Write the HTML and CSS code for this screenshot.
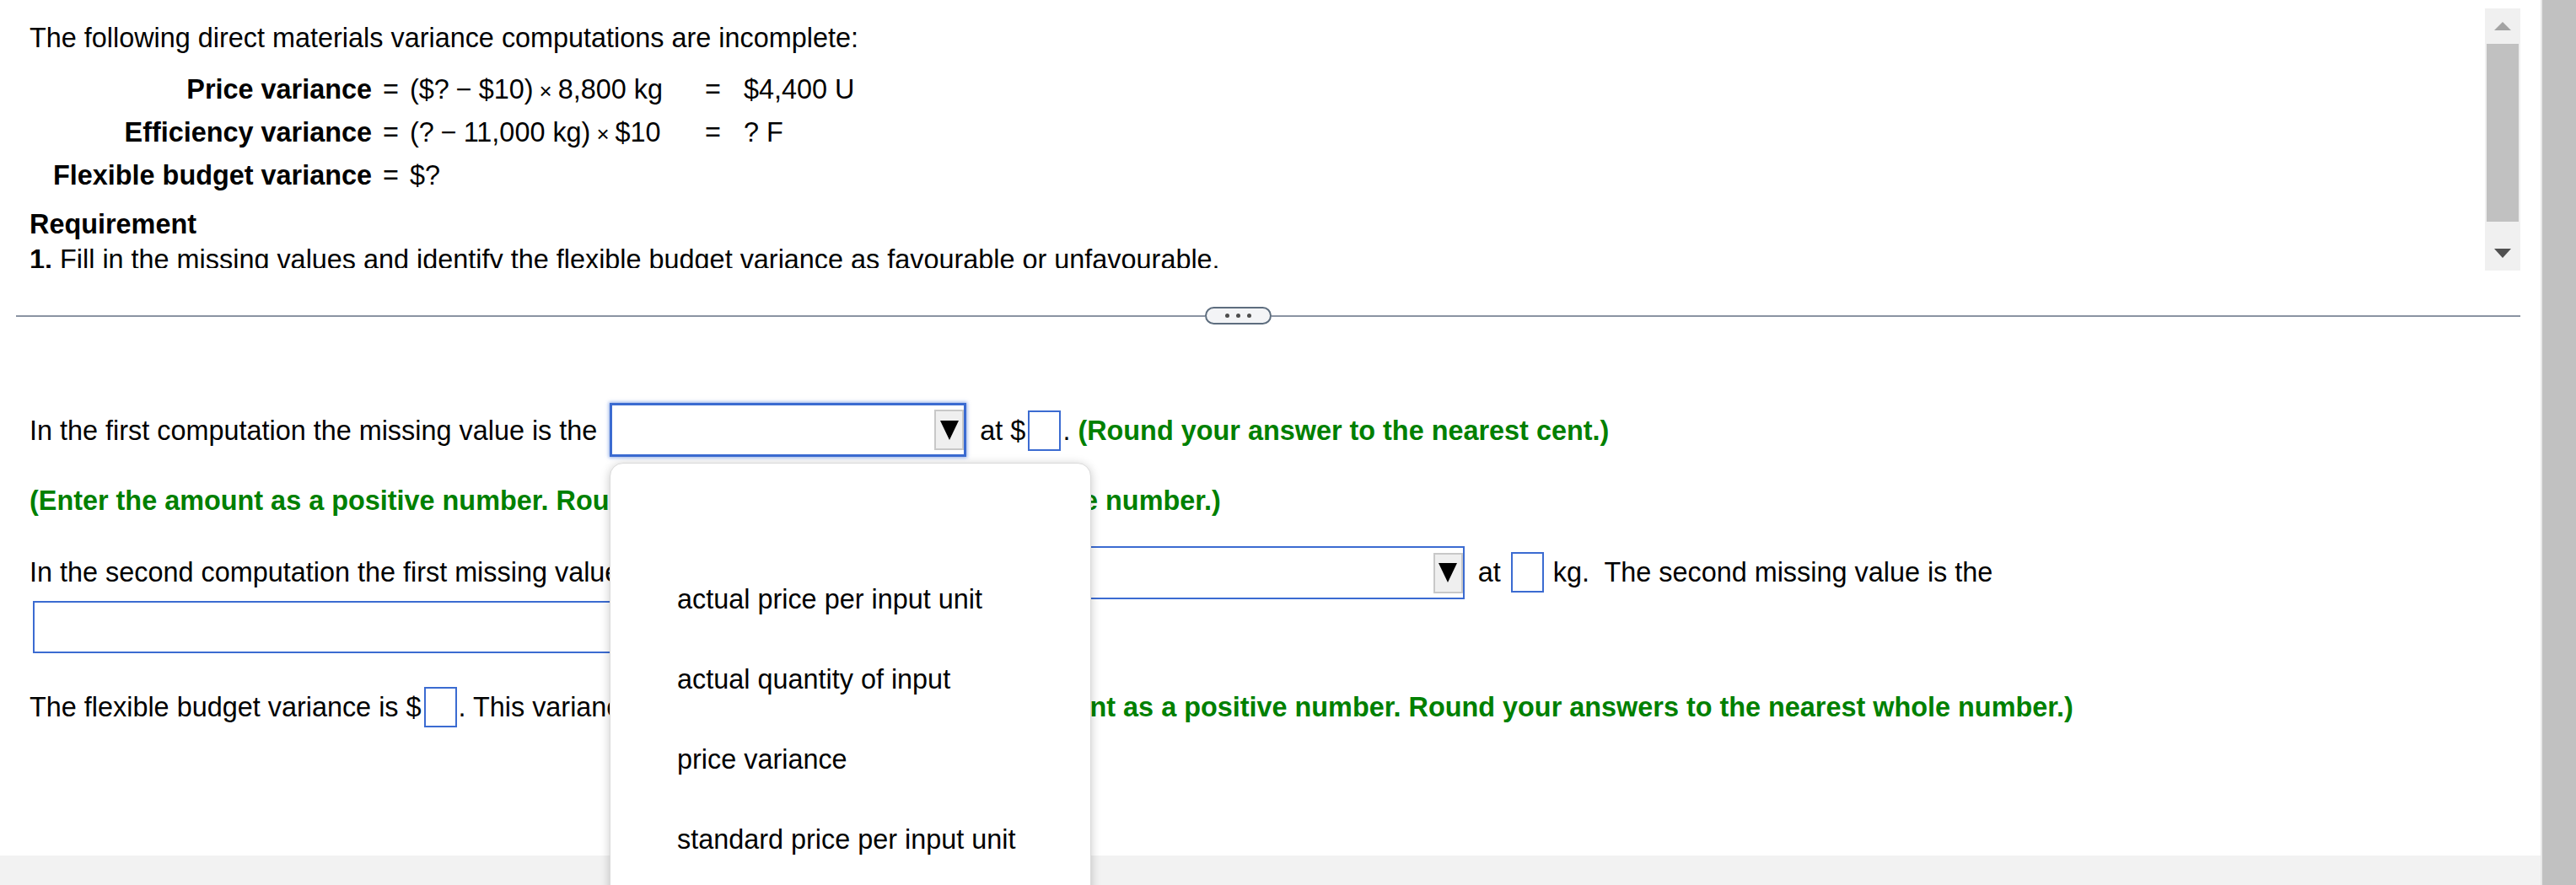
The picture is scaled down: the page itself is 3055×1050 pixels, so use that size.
FILE: index.html
```html
<!DOCTYPE html>
<html lang="en">
<head>
<meta charset="utf-8">
<title>Direct materials variance</title>
<link rel="stylesheet" href="styles.css">
</head>
<body>
<div class="page">
  <main class="main">
    <section class="panel">
      <div class="panel-content">
        <p class="intro">The following direct materials variance computations are incomplete:</p>
        <div class="eqs">
          <div class="lbl">Price variance</div><div class="eq">=</div><div class="expr">($?<span class="minus">−</span>$10)<span class="times">×</span>8,800 kg</div><div class="res">=<span class="val">$4,400 U</span></div>
          <div class="lbl">Efficiency variance</div><div class="eq">=</div><div class="expr">(?<span class="minus">−</span>11,000 kg)<span class="times">×</span>$10</div><div class="res">=<span class="val">? F</span></div>
          <div class="lbl">Flexible budget variance</div><div class="eq">=</div><div class="expr">$?</div><div class="res"></div>
        </div>
        <p class="req-title">Requirement</p>
        <p class="req"><b>1.</b> Fill in the missing values and identify the flexible budget variance as favourable or unfavourable.</p>
      </div>
      <div class="vscroll">
        <div class="sb-btn"><svg width="20" height="10" viewBox="0 0 20 10"><path d="M10 0L20 10H0Z" fill="#a3a3a3"/></svg></div>
        <div class="sb-track"><div class="sb-thumb"></div></div>
        <div class="sb-btn"><svg width="20" height="11" viewBox="0 0 20 11"><path d="M0 0H20L10 11Z" fill="#505050"/></svg></div>
      </div>
    </section>

    <div class="divider">
      <span class="rule rule-left"></span>
      <span class="pill"><i></i><i></i><i></i></span>
      <span class="rule rule-right"></span>
    </div>

    <section class="answers">
      <div class="row r1">In the first computation the missing value is the <span class="select focus s1"><span class="inner"><span class="arrow"><svg width="22" height="23" viewBox="0 0 22 23"><path d="M0 0H22L11 23Z" fill="#000"/></svg></span></span></span> at $<span class="box"></span>. <b class="hint">(Round your answer to the nearest cent.)</b></div>
      <p class="row r2 hint">(Enter the amount as a positive number. Round your answers to the nearest whole number.)</p>
      <div class="row r3">In the second computation the first missing value is the <span class="select s2"><span class="inner"><span class="arrow"><svg width="22" height="23" viewBox="0 0 22 23"><path d="M0 0H22L11 23Z" fill="#000"/></svg></span></span></span> at <span class="box"></span> kg.&nbsp; The second missing value is the</div>
      <div class="row r4"><span class="select s3"><span class="inner"><span class="arrow"><svg width="22" height="23" viewBox="0 0 22 23"><path d="M0 0H22L11 23Z" fill="#000"/></svg></span></span></span>.</div>
      <div class="row r5">The flexible budget variance is $<span class="box"></span>. This variance is <span class="select s4"><span class="inner"><span class="arrow"><svg width="22" height="23" viewBox="0 0 22 23"><path d="M0 0H22L11 23Z" fill="#000"/></svg></span></span></span>. <b class="hint">(Enter the amount as a positive number. Round your answers to the nearest whole number.)</b></div>
    </section>

    <footer class="footer"></footer>

    <div class="popup" role="listbox">
      <div class="option"></div>
      <div class="option">actual price per input unit</div>
      <div class="option">actual quantity of input</div>
      <div class="option">price variance</div>
      <div class="option">standard price per input unit</div>
    </div>
  </main>
  <div class="page-scroll"></div>
</div>
</body>
</html>
```

FILE: styles.css
```css
html, body {
  margin: 0;
  height: 100%;
  overflow: hidden;
  background: #fff;
}

body {
  font-family: "Liberation Sans", Arial, sans-serif;
  font-size: 32.4px;
  color: #000;
}

p { margin: 0; }

.page {
  display: flex;
  height: 1050px;
}

.main {
  flex: 1;
  position: relative;
  display: flex;
  flex-direction: column;
  overflow: hidden;
}

.page-scroll {
  width: 40px;
  background: #c1c1c1;
  border-left: 2px solid #e8e8e8;
}

/* ---------- question panel ---------- */
.panel {
  display: flex;
  align-items: flex-start;
  margin: 10px 24px 0 19px;
  height: 311px;
}

.panel-content {
  flex: 1;
  height: 308px;
  box-sizing: border-box;
  padding: 17px 16px 0;
  overflow: hidden;
  white-space: nowrap;
}

.intro { line-height: 37.2px; }

.eqs {
  display: grid;
  grid-template-columns: max-content 45px max-content max-content;
  width: max-content;
  margin: 17px 0 0 28px;
  line-height: 51px;
}

.lbl { font-weight: bold; text-align: right; }
.eq { text-align: center; }
.res { padding-left: 50px; }
.val { margin-left: 27px; }

.minus { margin: 0 8px; }

.times {
  font-size: 0.8em;
  line-height: 0;
  margin: 0 7px;
}

.req-title {
  font-weight: bold;
  line-height: 31px;
  margin-top: 17px;
}

.req {
  line-height: 31px;
  margin-top: 11px;
}

.vscroll {
  width: 42px;
  height: 311px;
  background: #f0f0f0;
  display: flex;
  flex-direction: column;
}

.sb-btn {
  height: 42px;
  display: flex;
  align-items: center;
  justify-content: center;
}

.sb-track { flex: 1; }

.sb-thumb {
  height: 211px;
  margin: 0 2px;
  background: #c1c1c1;
}

/* ---------- divider ---------- */
.divider {
  display: flex;
  align-items: center;
  margin: 43px 24px 0 19px;
  height: 21px;
}

.rule {
  height: 2px;
  background: #8a93a2;
}

.rule-left { width: 1410px; }
.rule-right { flex: 1; }

.pill {
  box-sizing: border-box;
  width: 79px;
  height: 21px;
  border: 2px solid #5d6d7e;
  border-radius: 11px;
  background: #f3f4f6;
  display: flex;
  align-items: center;
  justify-content: center;
  gap: 8px;
}

.pill i {
  width: 5px;
  height: 5px;
  border-radius: 50%;
  background: #4d4d4d;
}

/* ---------- answers ---------- */
.answers {
  flex: 1;
  padding: 93px 0 0 35px;
}

.row { white-space: nowrap; }

.r2 { margin-top: 34px; line-height: 37.2px; }
.r3 { margin-top: 35px; }
.r4 { margin-top: 2px; }
.r5 { margin-top: 31px; }

.hint {
  color: #008000;
  font-weight: bold;
}

.select {
  display: inline-block;
  box-sizing: border-box;
  border: 2px solid #3b6bd1;
  background: #fff;
  overflow: hidden;
  vertical-align: -20px;
  margin: 0 7px 0 6px;
}

.select.focus {
  border-width: 3px;
  box-shadow: 0 0 4px 1px rgba(59, 107, 209, 0.55);
}

.select .inner {
  display: flex;
  justify-content: flex-end;
  align-items: center;
  height: 100%;
}

.arrow {
  box-sizing: border-box;
  width: 35px;
  height: 48px;
  border: 2px solid #c8c8c8;
  background: #efefef;
  display: flex;
  align-items: center;
  justify-content: center;
}

.s1 { width: 423px; height: 64px; }
.s2 { width: 900px; height: 63px; vertical-align: -21px; }
.s3 { width: 900px; height: 62px; margin-left: 4px; }
.s4 { width: 220px; height: 64px; }

.box {
  display: inline-block;
  box-sizing: border-box;
  width: 39px;
  height: 48px;
  border: 2px solid #3b6bd1;
  background: #fff;
  overflow: hidden;
  vertical-align: -13px;
  margin: 0 2px 0 3px;
}

.footer {
  height: 35px;
  background: #f2f2f2;
}

/* ---------- open dropdown ---------- */
.popup {
  position: absolute;
  left: 723px;
  top: 549px;
  width: 571px;
  height: 560px;
  box-sizing: border-box;
  padding-top: 19px;
  background: #fff;
  border: 1px solid #dadada;
  border-radius: 16px;
  box-shadow: 0 2px 12px rgba(0, 0, 0, 0.22);
}

.option {
  height: 95px;
  line-height: 95px;
  padding-left: 79px;
  white-space: nowrap;
}
```
